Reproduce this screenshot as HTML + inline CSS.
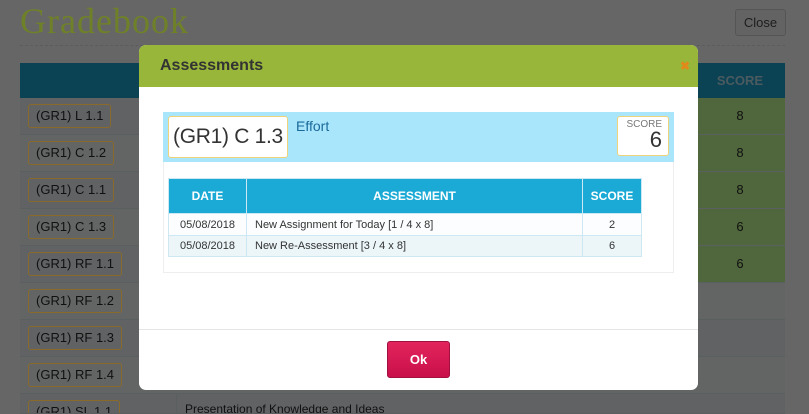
<!DOCTYPE html>
<html style="width:809px;height:414px;overflow:hidden;background:#aaa"><head><style>
*{box-sizing:border-box;margin:0;padding:0}
body{width:809px;height:414px;overflow:hidden;background:#aaa;font-family:"Liberation Sans",sans-serif;position:relative}
.abs{position:absolute}
.title{left:20px;top:0;font-family:"Liberation Serif",serif;font-size:36px;color:#b9d743;letter-spacing:1px}
.dash{left:20px;top:45px;width:765px;border-top:1px dashed #999}
.close{left:735px;top:9px;width:51px;height:27px;border:1px solid #8e8e8e;border-radius:3px;background:#a5a5a5;color:#333;font-size:13px;text-align:center;line-height:25px}
.th{left:20px;top:63px;width:765px;height:35px;background:#14708c}
.th span{position:absolute;left:675px;width:90px;top:10px;text-align:center;color:#7c969f;font-weight:bold;font-size:13px}
.row{left:20px;width:765px;height:37px;border-bottom:1px solid #969ea0;background:#a0a3a7}
.tag{position:absolute;left:8px;top:6px;height:24px;border:1px solid #e6b146;border-radius:3px;padding:0 7px;line-height:22px;font-size:13px;color:#1c1c1c;white-space:nowrap}
.sc{position:absolute;left:675px;width:90px;top:0;height:36px;line-height:36px;text-align:center;font-size:13px;color:#1c1c1c}
.g{background:#85aa64}
.ov{left:0;top:0;width:809px;height:414px;background:rgba(0,0,0,0.4)}
.modal{left:139px;top:45px;width:559px;height:345px;background:#fff;border-radius:7px;overflow:hidden}
.mh{height:42px;background:#98b73a;padding:12px 21px;font-size:16px;font-weight:bold;color:#333}
.x{position:absolute;right:8px;top:14px;color:#e08a1a;font-size:12px;font-weight:bold}
table{border-collapse:collapse;font-size:11px;color:#333}
td,th{border:1px solid #cde8f2}
</style></head><body>
<div class="abs title">Gradebook</div>
<div class="abs dash"></div>
<div class="abs close">Close</div>
<div class="abs th"><span>SCORE</span></div>
<div class="abs row" style="top:98px"><div class="tag">(GR1) L 1.1</div><div class="sc g">8</div></div>
<div class="abs row" style="top:135px;background:#a6a8a8"><div class="tag">(GR1) C 1.2</div><div class="sc g">8</div></div>
<div class="abs row" style="top:172px"><div class="tag">(GR1) C 1.1</div><div class="sc g">8</div></div>
<div class="abs row" style="top:209px;background:#a6a8a8"><div class="tag">(GR1) C 1.3</div><div class="sc g">6</div></div>
<div class="abs row" style="top:246px"><div class="tag">(GR1) RF 1.1</div><div class="sc g">6</div></div>
<div class="abs row" style="top:283px;background:#a6a8a8"><div class="tag">(GR1) RF 1.2</div></div>
<div class="abs row" style="top:320px"><div class="tag">(GR1) RF 1.3</div></div>
<div class="abs row" style="top:357px;background:#a6a8a8"><div class="tag">(GR1) RF 1.4</div></div>
<div class="abs row" style="top:394px;height:20px;overflow:hidden"><div class="tag">(GR1) SL 1.1</div><div style="position:absolute;left:156px;top:0;height:37px;border-left:1px solid #969ea0;padding:8px 8px;font-size:12px;color:#1c1c1c">Presentation of Knowledge and Ideas</div></div>
<div class="abs ov"></div>
<div class="abs modal">
<div class="mh">Assessments</div><div class="x">✖</div>
<div class="abs" style="left:24px;top:67px;width:511px;height:161px;border:1px solid #eee"></div>
<div class="abs" style="left:24px;top:67px;width:511px;height:50px;background:#aae6fb"></div>
<div class="abs" style="left:29px;top:71px;width:120px;height:42px;background:#fff;border:1px solid #f0d27a;border-radius:3px;font-size:21px;color:#333;padding:8px 4px;white-space:nowrap;letter-spacing:-0.3px">(GR1) C 1.3</div>
<div class="abs" style="left:157px;top:73px;font-size:14px;color:#1a6a9a">Effort</div>
<div class="abs" style="left:478px;top:71px;width:52px;height:40px;background:#fff;border:1px solid #f0d27a;border-radius:3px;text-align:right;padding:2px 6px;color:#333">
<div style="font-size:10px;color:#777">SCORE</div><div style="font-size:22px;line-height:20px">6</div></div>
<table class="abs" style="left:29px;top:133px;width:474px">
<tr style="background:#1aaad5;color:#fff;height:35px;font-size:12px"><th style="width:78px">DATE</th><th>ASSESSMENT</th><th style="width:59px">SCORE</th></tr>
<tr style="background:#fbfdfe;height:22px"><td style="text-align:center">05/08/2018</td><td style="padding-left:8px">New Assignment for Today [1 / 4 x 8]</td><td style="text-align:center">2</td></tr>
<tr style="background:#ecf6f9;height:21px"><td style="text-align:center">05/08/2018</td><td style="padding-left:8px">New Re-Assessment [3 / 4 x 8]</td><td style="text-align:center">6</td></tr>
</table>
<div class="abs" style="left:0;top:284px;width:559px;border-top:1px solid #e5e5e5"></div>
<div class="abs" style="left:248px;top:296px;width:63px;height:37px;background:linear-gradient(#e3245c,#c9104a);border:1px solid #a01040;border-radius:3px;color:#fff;font-weight:bold;font-size:13px;text-align:center;line-height:35px">Ok</div>
</div>
</body></html>
